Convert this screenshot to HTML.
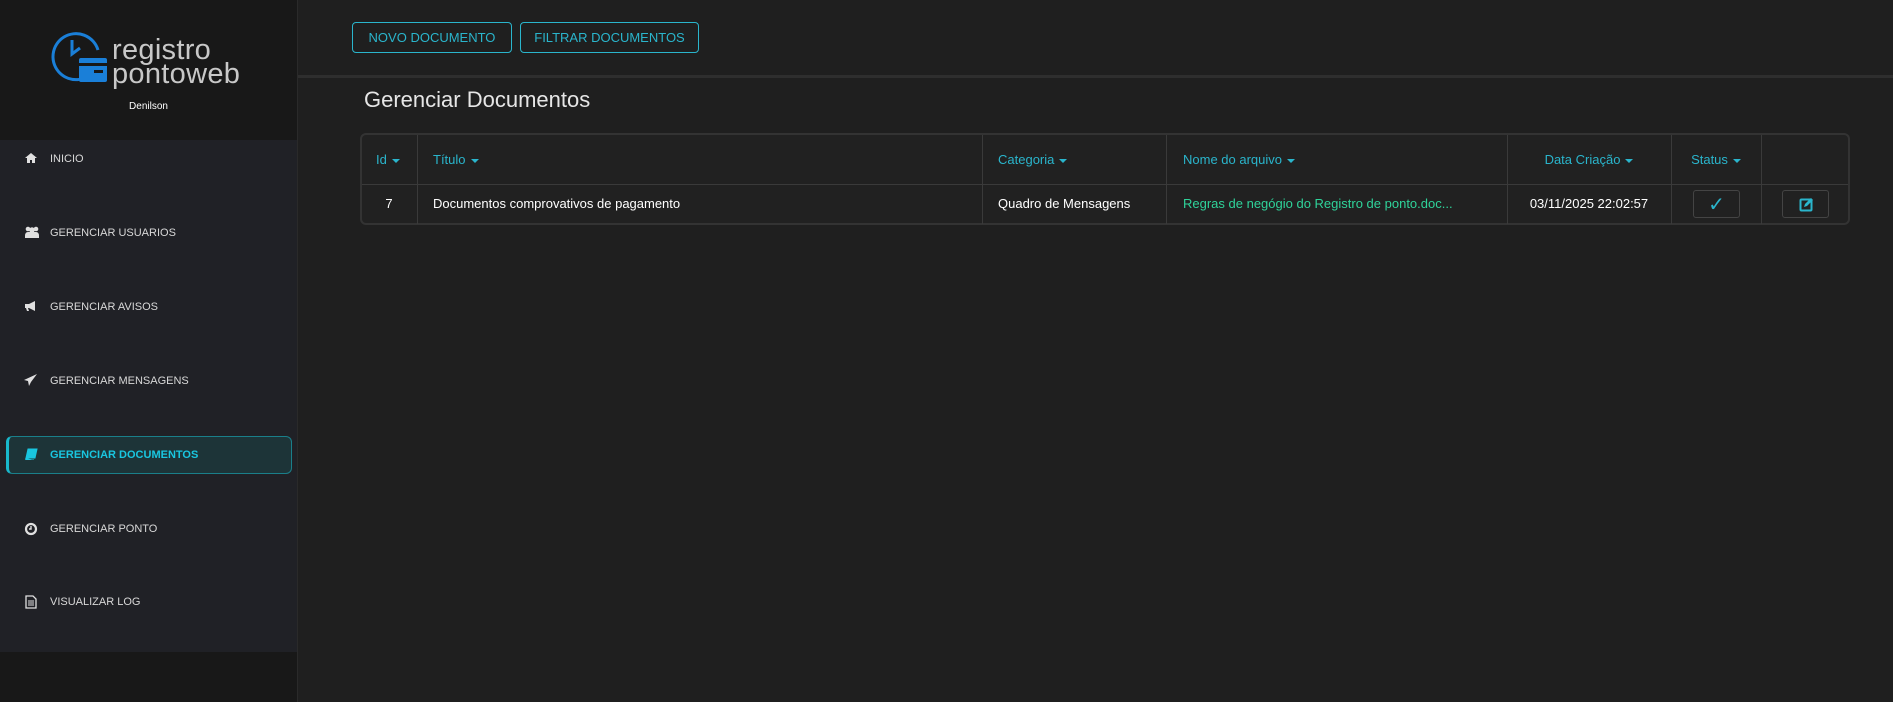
<!DOCTYPE html>
<html><head><meta charset="utf-8"><style>
*{box-sizing:border-box;margin:0;padding:0}
body{width:1893px;height:702px;background:#1f1f1f;font-family:"Liberation Sans",sans-serif;position:relative;overflow:hidden}
.side{position:absolute;left:0;top:0;width:298px;height:702px;background:#181818;border-right:1px solid #2a2a2a}
.menu{position:absolute;left:0;top:140px;width:297px;height:512px;background:#202126}
.item{position:absolute;left:0;width:297px;height:20px;color:#d8d8d8;font-size:11px;line-height:20px}
.item svg{position:absolute;left:24px;top:3px}
.item span{position:absolute;left:50px}
.active{position:absolute;left:6px;top:436px;width:286px;height:38px;background:#1d3438;border:1px solid #1a7f8a;border-left:3px solid #19b8cc;border-radius:6px}
.btn{position:absolute;top:22px;height:31px;border:1px solid #2ab5cc;border-radius:4px;color:#2ab5cc;font-size:13px;line-height:29px;text-align:center}
.cell{position:absolute;font-size:13px;line-height:16px}
.h{color:#2ab5cc}
.car{display:inline-block;width:0;height:0;border-left:4px solid transparent;border-right:4px solid transparent;border-top:4px solid #2ab5cc;vertical-align:middle;margin-left:5px}
.vl{position:absolute;top:135px;width:1px;height:89px;background:#3a3a3a}
</style></head><body>
<div class="side">
<svg style="position:absolute;left:50px;top:30px" width="62" height="56" viewBox="0 0 62 56">
<path d="M46 38 A23 23 0 1 1 48 20" fill="none" stroke="#1a7fd8" stroke-width="3"/>
<path d="M22 10 L22 24 L30 18" fill="none" stroke="#1a7fd8" stroke-width="3"/>
<rect x="29" y="28" width="28" height="24" rx="2" fill="#1a7fd8"/>
<rect x="29" y="33" width="28" height="3" fill="#181818"/>
<rect x="44" y="40" width="9" height="3" fill="#181818"/>
</svg>
<div style="position:absolute;left:112px;top:38px;color:#c8c8c8;font-size:29px;line-height:24px;letter-spacing:0.3px">registro<br>pontoweb</div>
<div style="position:absolute;left:0;width:297px;top:101px;text-align:center;color:#fff;font-size:10px">Denilson</div>
</div>
<div class="menu"></div>
<div class="active"></div>
<div class="item" style="top:149px"><svg width="14" height="12" viewBox="0 0 14 12"><path d="M7 1 L1 6 H3 V11 H6 V8 H8 V11 H11 V6 H13Z" fill="#e0e0e0"/></svg><span>INICIO</span></div>
<div class="item" style="top:223px"><svg width="16" height="12" viewBox="0 0 16 12"><circle cx="4" cy="3" r="2.3" fill="#e0e0e0"/><circle cx="12" cy="3" r="2.3" fill="#e0e0e0"/><circle cx="8" cy="4" r="2.8" fill="#e0e0e0"/><path d="M1 10 Q1 6 4 6 H12 Q15 6 15 10 V12 H1Z" fill="#e0e0e0"/></svg><span>GERENCIAR USUARIOS</span></div>
<div class="item" style="top:297px"><svg width="14" height="12" viewBox="0 0 14 12"><path d="M1 4 H5 L11 1 V11 L5 8 H4 L5 11 H3 L2 8 H1Z" fill="#e0e0e0"/></svg><span>GERENCIAR AVISOS</span></div>
<div class="item" style="top:371px"><svg width="14" height="12" viewBox="0 0 14 12"><path d="M13 0 L0 6 L4 7 L5 12 L7 8 L13 0Z" fill="#e0e0e0"/></svg><span>GERENCIAR MENSAGENS</span></div>
<div class="item" style="top:445px;color:#19c6e0;font-weight:bold"><svg width="14" height="12" viewBox="0 0 14 12"><path d="M4 1 H13 L11 10 H2Z M2 10 Q1 12 3 12 H10" fill="#19c6e0" stroke="#19c6e0"/></svg><span>GERENCIAR DOCUMENTOS</span></div>
<div class="item" style="top:519px"><svg width="14" height="14" viewBox="0 0 14 14"><circle cx="7" cy="7" r="5" fill="none" stroke="#e0e0e0" stroke-width="2.2"/><path d="M7 4 V7 H5" stroke="#e0e0e0" stroke-width="1.4" fill="none"/></svg><span>GERENCIAR PONTO</span></div>
<div class="item" style="top:592px"><svg width="14" height="14" viewBox="0 0 14 14"><path d="M2 1 H9 L12 4 V13 H2Z" fill="none" stroke="#e0e0e0" stroke-width="1.3"/><path d="M4 6 H10 M4 8 H10 M4 10 H10" stroke="#e0e0e0"/></svg><span>VISUALIZAR LOG</span></div>

<div class="btn" style="left:352px;width:160px">NOVO DOCUMENTO</div>
<div class="btn" style="left:520px;width:179px">FILTRAR DOCUMENTOS</div>
<div style="position:absolute;left:298px;top:75px;width:1595px;height:3px;background:#2e2e2e"></div>
<div style="position:absolute;left:364px;top:87px;color:#e6e6e6;font-size:22px">Gerenciar Documentos</div>

<div style="position:absolute;left:360px;top:133px;width:1490px;height:92px;border:2px solid #333;border-radius:6px;background:#212121"></div>
<div style="position:absolute;left:362px;top:184px;width:1486px;height:1px;background:#3a3a3a"></div>
<div class="vl" style="left:417px"></div><div class="vl" style="left:982px"></div><div class="vl" style="left:1166px"></div><div class="vl" style="left:1507px"></div><div class="vl" style="left:1671px"></div><div class="vl" style="left:1761px"></div>

<div class="cell h" style="left:376px;top:152px">Id<i class="car"></i></div>
<div class="cell h" style="left:433px;top:152px">Título<i class="car"></i></div>
<div class="cell h" style="left:998px;top:152px">Categoria<i class="car"></i></div>
<div class="cell h" style="left:1183px;top:152px">Nome do arquivo<i class="car"></i></div>
<div class="cell h" style="left:1507px;width:164px;text-align:center;top:152px">Data Criação<i class="car"></i></div>
<div class="cell h" style="left:1671px;width:90px;text-align:center;top:152px">Status<i class="car"></i></div>

<div class="cell" style="left:361px;width:56px;text-align:center;top:196px;color:#fff">7</div>
<div class="cell" style="left:433px;top:196px;color:#fff">Documentos comprovativos de pagamento</div>
<div class="cell" style="left:998px;top:196px;color:#fff">Quadro de Mensagens</div>
<div class="cell" style="left:1183px;top:196px;color:#2fd39a">Regras de negógio do Registro de ponto.doc...</div>
<div class="cell" style="left:1507px;width:164px;text-align:center;top:196px;color:#fff">03/11/2025 22:02:57</div>
<div style="position:absolute;left:1693px;top:190px;width:47px;height:28px;border:1px solid #444;border-radius:3px;color:#2ab5cc;font-size:20px;text-align:center;line-height:28px">✓</div>
<div style="position:absolute;left:1782px;top:190px;width:47px;height:28px;border:1px solid #444;border-radius:3px"><svg style="position:absolute;left:16px;top:6px" width="15" height="15" viewBox="0 0 15 15"><rect x="1.5" y="2.5" width="11" height="11" rx="1" fill="none" stroke="#2ab5cc" stroke-width="2"/><path d="M5 10 L6 7 L12 1 L14 3 L8 9Z" fill="#2ab5cc"/></svg></div>
</body></html>
